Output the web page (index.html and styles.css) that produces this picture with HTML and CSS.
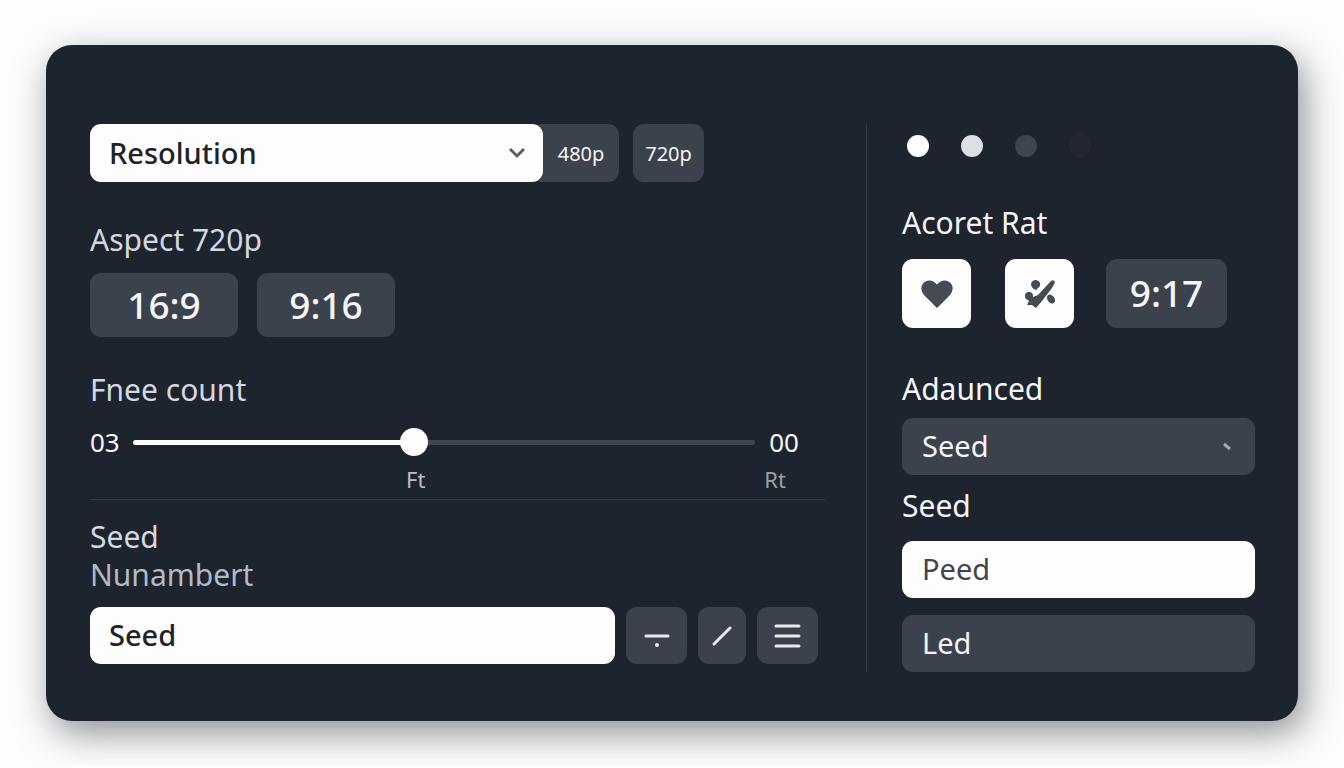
FILE: index.html
```html
<!DOCTYPE html>
<html lang="en">
<head>
    <meta charset="UTF-8">
    <meta name="viewport" content="width=device-width, initial-scale=1.0">
    <title>Settings</title>
    <link rel="stylesheet" href="styles.css">
</head>
<body>
    <div class="panel">
        <main class="main">
            <div class="resolution-row">
                <div class="select-wrap resolution">
                    <select class="field light" aria-label="Resolution">
                        <option>Resolution</option>
                    </select>
                    <svg class="arrow" viewBox="0 0 16 16" aria-hidden="true"><path d="M1 4l7 7 7-7"/></svg>
                </div>
                <button type="button" class="btn chip joined">480p</button>
                <button type="button" class="btn chip">720p</button>
            </div>

            <h2 class="label">Aspect 720p</h2>
            <div class="ratio-row">
                <button type="button" class="btn ratio wide">16:9</button>
                <button type="button" class="btn ratio">9:16</button>
            </div>

            <label class="label count-label" for="count">Fnee count</label>
            <div class="slider">
                <span>03</span>
                <input type="range" id="count" min="0" max="100" value="45">
                <span class="slider-max">00</span>
                <div class="ticks">
                    <span>Ft</span>
                    <span class="faint">Rt</span>
                </div>
            </div>

            <label class="label seed-label" for="seed">Seed<br><span class="sub">Nunambert</span></label>
            <div class="seed-row">
                <input type="text" class="field light" id="seed" value="Seed">
                <button type="button" class="btn tool" aria-label="Divide">
                    <svg viewBox="0 0 28 28"><path d="M3 14h22"/><circle cx="14" cy="23" r="2"/></svg>
                </button>
                <button type="button" class="btn tool narrow" aria-label="Edit">
                    <svg viewBox="0 0 28 28"><path d="M6 22L22 6"/></svg>
                </button>
                <button type="button" class="btn tool" aria-label="Menu">
                    <svg viewBox="0 0 28 28"><path d="M2 4h23M2 14h23M2 24h23"/></svg>
                </button>
            </div>
        </main>

        <aside class="side">
            <div class="dots">
                <span class="dot white"></span>
                <span class="dot grey"></span>
                <span class="dot dark"></span>
                <span class="dot empty"></span>
            </div>

            <h2 class="label">Acoret Rat</h2>
            <div class="icon-row">
                <button type="button" class="btn icon" aria-label="Favourite">
                    <svg viewBox="0 0 32 32"><path d="M16 30L3 17C-1 12 0 7 3 4.500C7 1 12 2 16 6.500C20 2 25 1 29 4.500C32 7 33 12 29 17Z"/></svg>
                </button>
                <button type="button" class="btn icon" aria-label="Tools">
                    <svg viewBox="0 0 32 32">
                        <path d="M27 3Q30 1 31 4.500L28 10L18 23L12 30L8 27L3 27L5 23L3 21L9 19L14 17Z"/>
                        <path d="M7 6Q8 2 12 2Q17 3 16 8L12 12Q7 10 7 6Z"/>
                        <circle cx="5" cy="18" r="4"/>
                        <ellipse cx="27" cy="21" rx="3.500" ry="5" transform="rotate(-35 27 21)"/>
                    </svg>
                </button>
                <button type="button" class="btn ratio time">9:17</button>
            </div>

            <label class="label advanced-label" for="advanced">Adaunced</label>
            <div class="select-wrap">
                <select class="field" id="advanced">
                    <option>Seed</option>
                </select>
                <svg class="arrow small" viewBox="0 0 16 16" aria-hidden="true"><path d="M5 5l6 5"/></svg>
            </div>

            <label class="label side-seed-label" for="peed">Seed</label>
            <input type="text" class="field light muted" id="peed" value="Peed">
            <input type="text" class="field last" aria-label="Led" value="Led">
        </aside>
    </div>
</body>
</html>
```
FILE: styles.css
```css
* {
    box-sizing: border-box;
}
body {
    margin: 0;
    padding: 45px 46px;
    background: #fdfdfd;
    font-family: 'Noto Sans', Arial, sans-serif;
    color: #f3f5f8;
}
button, input, select {
    font-family: inherit;
    color: inherit;
    margin: 0;
}
.panel {
    display: grid;
    grid-template-columns: minmax(0, 1fr) 389px;
    gap: 41px;
    padding: 79px 43px 49px 44px;
    border-radius: 26px;
    background: #1e242d;
    box-shadow: 6px 12px 36px rgba(30, 35, 45, 0.5);
}
.label {
    display: block;
    margin: 0;
    font-size: 30px;
    font-weight: 400;
    line-height: 36px;
    padding-bottom: 2px;
}
.main .label {
    color: #d3d8e2;
}
.main .sub {
    color: #b3bac7;
}

/* fields */
.field {
    display: block;
    width: 100%;
    height: 57px;
    padding: 0 20px 2px;
    border: none;
    border-radius: 11px;
    background: #3b424c;
    font-size: 29px;
    appearance: none;
}
.field.light {
    background: #fdfdfd;
    color: #202226;
}
.main .field {
    padding-left: 19px;
    font-weight: 500;
}
.field.muted {
    color: #41444a;
}
.select-wrap {
    position: relative;
}
.arrow {
    position: absolute;
    right: 18px;
    top: 50%;
    width: 16px;
    height: 16px;
    margin-top: -8px;
    fill: none;
    stroke: #5c5e62;
    stroke-width: 3;
    pointer-events: none;
}
.arrow.small {
    stroke: #a4a8b0;
    right: 20px;
}

/* buttons */
.btn {
    display: flex;
    align-items: center;
    justify-content: center;
    padding: 0;
    border: none;
    border-radius: 11px;
    background: #3b424c;
    cursor: pointer;
}
.chip {
    width: 71px;
    font-size: 20px;
}
.chip.joined {
    width: 88px;
    margin: 0 14px 0 -12px;
    padding-left: 12px;
}
.ratio {
    width: 138px;
    height: 64px;
    padding-bottom: 2px;
    font-size: 37px;
    font-weight: 500;
}
.ratio.wide {
    width: 148px;
}
.ratio.time {
    width: 121px;
    height: 69px;
}
.tool {
    flex: none;
    width: 61px;
    height: 57px;
}
.tool.narrow {
    width: 48px;
}
.tool svg {
    width: 28px;
    height: 28px;
    fill: #e8eaee;
    stroke: #e8eaee;
    stroke-width: 3;
    stroke-linecap: round;
}
.tool circle {
    stroke: none;
}
.icon {
    width: 69px;
    height: 69px;
    margin-right: 34px;
    background: #fdfdfd;
}
.icon svg {
    width: 32px;
    height: 32px;
    fill: #454a53;
}

/* left column */
.resolution-row {
    display: flex;
    margin-bottom: 40px;
}
.resolution {
    flex: 0 1 453px;
    z-index: 1;
}
.resolution .field {
    height: 58px;
}
.ratio-row {
    display: flex;
    gap: 19px;
    margin: 13px 0 35px;
}
.slider {
    display: grid;
    grid-template-columns: 43px 1fr 44px;
    align-items: center;
    row-gap: 7px;
    margin-top: 16px;
    padding: 0 26px 6px 0;
    font-size: 26px;
    line-height: 32px;
}
.slider-max {
    text-align: right;
}
.slider input {
    width: 100%;
    height: 28px;
    appearance: none;
    background: none;
}
.slider input::-webkit-slider-runnable-track {
    height: 5px;
    border-radius: 3px;
    background: linear-gradient(to right, #fdfdfd 45%, #3f454f 45%);
}
.slider input::-webkit-slider-thumb {
    appearance: none;
    width: 28px;
    height: 28px;
    margin-top: -12px;
    border-radius: 50%;
    background: #fdfdfd;
}
.ticks {
    grid-column: 2 / 4;
    display: flex;
    justify-content: space-between;
    padding: 0 13px 0 41%;
    font-size: 22px;
    line-height: 28px;
    color: #b9bec8;
}
.ticks .faint {
    color: #9aa0aa;
}
.seed-label {
    padding-top: 18px;
    border-top: 1px solid #363c46;
    line-height: 38px;
}
.seed-row {
    display: flex;
    gap: 11px;
    margin-top: 11px;
    padding-right: 7px;
}

/* right column */
.side {
    padding-left: 35px;
    border-left: 1px solid #363c46;
}
.dots {
    display: flex;
    gap: 32px;
    padding: 11px 5px 48px;
}
.dot {
    width: 22px;
    height: 22px;
    border-radius: 50%;
}
.dot.white {
    background: #fdfdfd;
}
.dot.grey {
    background: #dcdfe3;
}
.dot.dark {
    background: #3f454f;
}
.dot.empty {
    border: 1px solid #292e37;
    background: #21262f;
}
.icon-row {
    display: flex;
    margin: 16px 0 43px;
}
.icon-row .time {
    margin-left: -2px;
}
.advanced-label {
    margin-bottom: 9px;
}
.side-seed-label {
    margin: 13px 0 15px;
}
.last {
    margin-top: 17px;
}
```
